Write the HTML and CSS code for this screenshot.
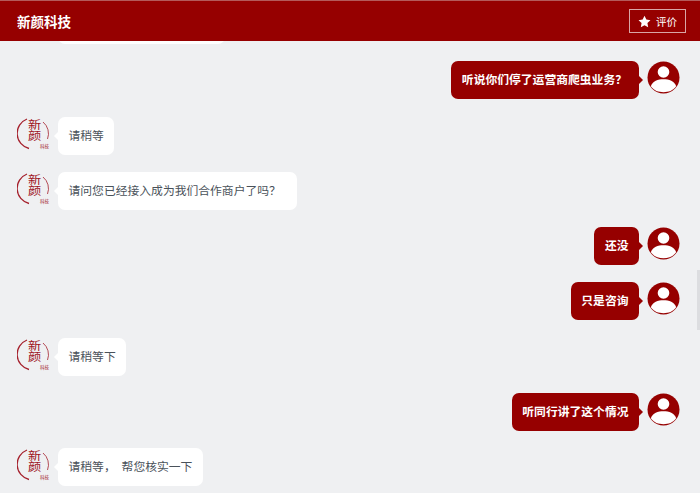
FILE: index.html
```html
<!DOCTYPE html>
<html lang="zh">
<head>
  <meta charset="UTF-8">
  <meta name="viewport" content="width=device-width, initial-scale=1.0">
  <title>新颜科技</title>
  <link rel="stylesheet" href="styles.css">
</head>
<body>
  <svg class="defs" width="0" height="0">
    <symbol id="user" viewBox="0 0 33 33">
      <circle cx="16.5" cy="16.5" r="16" fill="#960000"/>
      <circle cx="16.5" cy="11" r="5.800" fill="#fff"/>
      <path d="M3.800 25.300 C5.500 20 11 18.300 16.500 18.300 C22 18.300 27.500 20 29.200 25.300 C26 29.800 21.500 31.200 16.500 31.200 C11.500 31.200 7 29.800 3.800 25.300 Z" fill="#fff"/>
    </symbol>
    <symbol id="ring" viewBox="0 0 32 34">
      <path d="M10 1 A15.500 15.500 0 0 0 12 30.500" class="seal-arc"/>
      <path d="M26 4 A15 15 0 0 1 30.500 21" class="seal-arc thin"/>
    </symbol>
  </svg>

  <header class="topbar">
    <span class="brand">新颜科技</span>
    <button class="rate">
      <svg class="star" viewBox="0 0 24 24"><path d="M12 1.500l3.400 7 7.600 1-5.600 5.300 1.400 7.700-6.800-3.700-6.800 3.700 1.400-7.700L1 9.500l7.600-1z" fill="#fff"/></svg>
      评价
    </button>
  </header>

  <main class="chat">
    <div class="row left cut">
      <div class="bubble cut-bubble"></div>
    </div>

    <div class="row right">
      <div class="bubble trail">听说你们停了运营商爬虫业务？</div>
      <svg class="avatar"><use href="#user"/></svg>
    </div>
    <div class="row left">
      <div class="seal">
        <svg class="seal-ring"><use href="#ring"/></svg>
        <span class="seal-big">新</span>
        <span class="seal-big">颜</span>
        <span class="seal-small">科技</span>
      </div>
      <div class="bubble">请稍等</div>
    </div>
    <div class="row left">
      <div class="seal">
        <svg class="seal-ring"><use href="#ring"/></svg>
        <span class="seal-big">新</span>
        <span class="seal-big">颜</span>
        <span class="seal-small">科技</span>
      </div>
      <div class="bubble trail">请问您已经接入成为我们合作商户了吗？</div>
    </div>
    <div class="row right">
      <div class="bubble">还没</div>
      <svg class="avatar"><use href="#user"/></svg>
    </div>
    <div class="row right">
      <div class="bubble">只是咨询</div>
      <svg class="avatar"><use href="#user"/></svg>
    </div>
    <div class="row left">
      <div class="seal">
        <svg class="seal-ring"><use href="#ring"/></svg>
        <span class="seal-big">新</span>
        <span class="seal-big">颜</span>
        <span class="seal-small">科技</span>
      </div>
      <div class="bubble">请稍等下</div>
    </div>
    <div class="row right">
      <div class="bubble">听同行讲了这个情况</div>
      <svg class="avatar"><use href="#user"/></svg>
    </div>
    <div class="row left">
      <div class="seal">
        <svg class="seal-ring"><use href="#ring"/></svg>
        <span class="seal-big">新</span>
        <span class="seal-big">颜</span>
        <span class="seal-small">科技</span>
      </div>
      <div class="bubble">请稍等，&ensp;帮您核实一下</div>
    </div>
  </main>

  <div class="scroll-thumb"></div>
</body>
</html>
```

FILE: styles.css
```css
html, body {
  height: 100%;
}
body {
  margin: 0;
  overflow: hidden;
  background-color: #eff0f2;
  font-family: "Liberation Sans", "Noto Sans CJK SC", sans-serif;
  display: flex;
  flex-direction: column;
}
.defs {
  position: absolute;
}
.topbar {
  flex: none;
  height: 40px;
  border-top: 1px solid #b45a5a;
  background-color: #960000;
  display: flex;
  align-items: center;
  justify-content: space-between;
  padding: 0 14px 0 17px;
}
.brand {
  color: #fff;
  font-size: 13.500px;
  font-weight: bold;
}
.rate {
  width: 57px;
  height: 24px;
  padding: 0;
  border: 1px solid #d9a6a6;
  background: none;
  color: #fff;
  font-family: inherit;
  font-size: 10.500px;
  display: flex;
  align-items: center;
  justify-content: center;
  gap: 5px;
}
.star {
  width: 13px;
  height: 13px;
}
.chat {
  flex: 1;
  min-height: 0;
  display: flex;
  flex-direction: column;
  gap: 17.300px;
  padding: 0 20px 0 17px;
}
.row {
  flex: none;
  height: 38px;
  display: flex;
}
.row.right {
  justify-content: flex-end;
}
.row.cut {
  height: 3px;
  overflow: hidden;
  align-items: flex-end;
}
.avatar {
  flex: none;
  width: 33px;
  height: 33px;
}
.seal {
  position: relative;
  flex: none;
  box-sizing: border-box;
  width: 32px;
  height: 34px;
  margin-top: 1px;
  padding: 2px 0 0 2px;
  display: flex;
  flex-direction: column;
  align-items: center;
  color: #9e1422;
}
.seal-ring {
  position: absolute;
  left: 0;
  top: 0;
  width: 32px;
  height: 34px;
}
.seal-arc {
  fill: none;
  stroke: #a5202c;
  stroke-width: 1.300;
}
.seal-arc.thin {
  stroke-width: 0.800;
}
.seal-big {
  height: 11px;
  font-size: 11px;
  line-height: 11px;
  transform: scaleX(1.2);
}
.seal-small {
  position: absolute;
  right: 0;
  bottom: 3px;
  font-size: 4.500px;
  line-height: 5px;
}
.bubble {
  position: relative;
  box-sizing: border-box;
  height: 38px;
  line-height: 38px;
  padding: 0 10.500px;
  border-radius: 7px;
  font-size: 11.800px;
  white-space: nowrap;
}
.left .trail {
  padding-right: 16.500px;
}
.right .trail {
  padding-right: 12px;
}
.left .bubble {
  margin-left: 9px;
  background-color: #fff;
  color: #4a525a;
}
.right .bubble {
  margin-right: 8px;
  background-color: #960000;
  color: #fff;
  font-weight: bold;
}
.cut-bubble {
  flex: none;
  width: 167px;
  margin-left: 41px !important;
}
.bubble::after {
  content: "";
  position: absolute;
  top: 15px;
  border: 4px solid transparent;
}
.left .bubble::after {
  left: -8px;
  border-right-color: #fff;
}
.right .bubble::after {
  right: -8px;
  border-left-color: #960000;
}
.scroll-thumb {
  position: absolute;
  right: 0;
  top: 270px;
  width: 3px;
  height: 60px;
  background-color: #dcdde0;
}
```
